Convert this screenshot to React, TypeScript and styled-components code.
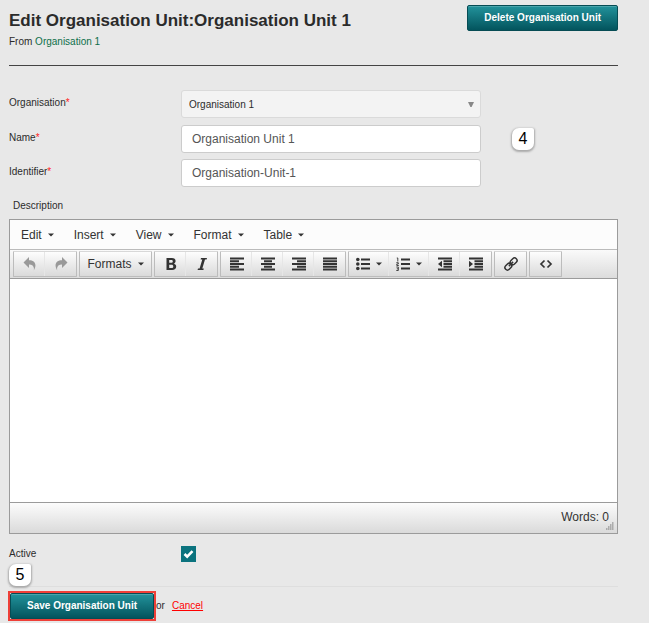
import React from 'react';
import styled, { createGlobalStyle, css } from 'styled-components';

const GlobalStyle = createGlobalStyle`
  *, *::before, *::after { box-sizing: border-box; }
  body {
    margin: 0;
    background: #e8e8e8;
    color: #2b2b2b;
    font: 10px/16px "Liberation Sans", Arial, sans-serif;
  }
  button, input, select, textarea { font-family: inherit; margin: 0; }
`;

const Page = styled.main`
  padding: 5px 31px 0 9px;
`;

const Header = styled.header`
  display: flex;
  justify-content: space-between;
  align-items: flex-start;
  height: 61px;
  border-bottom: 1px solid #444;
`;

const Title = styled.h1`
  margin: 4px 0 0;
  font-size: 17px;
  line-height: 24px;
  font-weight: bold;
`;

const Subtitle = styled.p`
  margin: 0;
  padding-top: 1px;
`;

const OrgLink = styled.a`
  color: #0f6f4a;
  text-decoration: none;
`;

const PrimaryButton = styled.button`
  height: 26px;
  padding: 0 16px;
  border: 1px solid #064c54;
  border-radius: 2px;
  background: linear-gradient(#22929b, #03545d);
  box-shadow: inset 0 1px 0 #4aa5ac;
  color: #fff;
  font-size: 10px;
  line-height: 16px;
  font-weight: bold;
  white-space: nowrap;
  cursor: pointer;
`;

const Fields = styled.div`
  display: grid;
  gap: 6px;
  padding-top: 24px;
`;

const FieldRow = styled.div`
  display: grid;
  grid-template-columns: 172px minmax(0, 300px) auto;
  align-items: center;
`;

const Label = styled.label`
  padding-bottom: 3px;
`;

const Required = styled.span`
  color: #f22;
`;

const controlStyle = css`
  width: 100%;
  height: 28px;
  border: 1px solid #ccc;
  border-radius: 3px;
`;

const TextInput = styled.input`
  ${controlStyle}
  padding: 0 10px;
  background: #fff;
  color: #555;
  font-size: 12px;
`;

const SelectWrap = styled.div`
  display: grid;
  align-items: center;
  padding-bottom: 1px;
  > * { grid-area: 1 / 1; }
  > svg { justify-self: end; margin-right: 7px; pointer-events: none; }
`;

const Select = styled.select`
  ${controlStyle}
  padding: 0 7px;
  border-color: #dadada;
  appearance: none;
  background: #f3f3f3;
  color: #2b2b2b;
  font-size: 10px;
`;

const StepBadge = styled.span<{ $inset?: boolean }>`
  display: flex;
  align-items: center;
  justify-content: center;
  width: 22px;
  height: 22px;
  margin-left: ${p => (p.$inset ? '0' : '31px')};
  border-radius: 7px 2px 7px 7px;
  background: #fff;
  box-shadow: 0 1px 2px 1px #aaa;
  color: #000;
  font-size: 16px;
  line-height: 20px;
`;

const DescriptionLabel = styled.label`
  display: block;
  padding: 11px 4px 5px;
`;

const Editor = styled.section`
  border: 1px solid #9b9b9b;
  background: #fff;
`;

const MenuBar = styled.div`
  display: flex;
  height: 30px;
  padding: 0 1px;
  border-bottom: 1px solid #bbb;
  background: #fcfcfc;
`;

const MenuButton = styled.button`
  display: flex;
  align-items: center;
  gap: 6px;
  padding: 0 10px;
  border: 0;
  background: none;
  color: #333;
  font-size: 12px;
  line-height: 16px;
`;

const ToolBar = styled.div`
  display: flex;
  gap: 2px;
  height: 29px;
  padding: 1px 3px;
  border-bottom: 1px solid #9b9b9b;
  background: linear-gradient(#fafafa, #dcdcdc);
`;

const ToolGroup = styled.div`
  display: flex;
  border: 1px solid #bcbcbc;
  border-top-color: #d8d8d8;
  border-radius: 1px;
  background: linear-gradient(#fdfdfd, #dadada);
`;

const widths = { icon: '31px', split: '40px', text: '71px' };

const ToolButton = styled.button<{ $kind?: keyof typeof widths }>`
  display: flex;
  align-items: center;
  justify-content: center;
  gap: 6px;
  width: ${p => widths[p.$kind ?? 'icon']};
  padding: 0;
  border: 0;
  background: none;
  color: #333;
  font-size: 12px;
  line-height: 16px;
  & + & { box-shadow: -1px 0 0 #e6e6e6; }
  &:disabled { color: #999; }
`;

const EditArea = styled.textarea`
  display: block;
  width: 100%;
  height: 223px;
  padding: 8px;
  border: 0;
  resize: none;
  outline: 0;
  background: #fff;
  font-size: 12px;
`;

const StatusBar = styled.footer`
  display: flex;
  justify-content: flex-end;
  height: 31px;
  padding: 6px 2px 2px 0;
  border-top: 1px solid #9b9b9b;
  background: linear-gradient(#fcfcfc, #dadada);
  color: #333;
  font-size: 12px;
  line-height: 16px;
  > svg { align-self: flex-end; margin-left: -4px; }
`;

const ActiveRow = styled.div`
  display: grid;
  grid-template-columns: 172px auto;
  align-items: center;
  padding: 12px 0 2px;
`;

const CheckWrap = styled.span`
  display: grid;
  width: 15px;
  height: 16px;
  place-items: center;
  > * { grid-area: 1 / 1; }
  > svg { pointer-events: none; }
`;

const CheckInput = styled.input`
  appearance: none;
  width: 100%;
  height: 100%;
  background: #9a9a9a;
  &:checked { background: #0b737e; }
`;

const StepLine = styled.div`
  height: 23px;
  border-bottom: 1px solid #dedede;
`;

const Actions = styled.div`
  display: flex;
  align-items: center;
  margin: 4px 0 0 -1px;
`;

const Highlight = styled.div`
  display: flex;
  border: 2px solid #ee4038;
`;

const CancelLink = styled.a`
  margin-left: 7px;
  color: #f00;
  text-decoration: underline;
`;

const Caret = () => (
  <svg width="6" height="4" viewBox="0 0 6 4" aria-hidden="true">
    <path d="M0 .5h6L3 3.5z" fill="#333" />
  </svg>
);

const SelectArrow = () => (
  <svg width="6" height="6" viewBox="0 0 6 6" aria-hidden="true">
    <path d="M0 1h6L3.6 6H2.4z" fill="#888" />
  </svg>
);

const Grip = () => (
  <svg width="10" height="9" viewBox="0 0 10 9" aria-hidden="true">
    <path d="M7 1h2M5 3h4M3 5h6M1 7h8" stroke="#777" strokeDasharray="1.5 .5" />
  </svg>
);

const Tick = () => (
  <svg width="11" height="10" viewBox="0 0 11 10" aria-hidden="true">
    <path d="M1.5 5l2.7 2.7L9.5 2.2" fill="none" stroke="#fff" strokeWidth="2.6" />
  </svg>
);

const iconShapes = {
  undo: <path d="M6 0v3.200c5.500 0 8.500 3.800 4.800 10.300C11.600 9.300 9.500 7.500 6 7.500V11L.5 5.500z" fill="currentColor" />,
  redo: <path d="M8 0v3.200c-5.500 0-8.500 3.800-4.800 10.300C2.400 9.300 4.500 7.500 8 7.500V11l5.500-5.500z" fill="currentColor" />,
  bold: (
    <path
      fillRule="evenodd"
      fill="currentColor"
      d="M2.5 1h5.3c2.5 0 3.8 1.2 3.8 3.1 0 1.2-.6 2.1-1.7 2.6 1.5.4 2.3 1.4 2.3 2.8 0 2.2-1.5 3.5-4.1 3.5H2.500zM5.200 3v2.800h2c1.100 0 1.600-.5 1.600-1.400S8.300 3 7.200 3zM5.200 7.800V11h2.300c1.200 0 1.800-.6 1.800-1.600s-.6-1.600-1.800-1.600z"
    />
  ),
  italic: <path d="M6 1h6l-.4 1.500H10L7.300 11.500h1.500L8.400 13H2.600L3 11.500h1.600L7.300 2.500H5.600z" fill="currentColor" />,
  left: <path d="M0 1.500h14M0 4.250h9M0 7h14M0 9.750h9M0 12.500h14" stroke="currentColor" strokeWidth="1.800" />,
  center: <path d="M0 1.500h14M3 4.250h8M0 7h14M3 9.750h8M0 12.500h14" stroke="currentColor" strokeWidth="1.800" />,
  right: <path d="M0 1.500h14M5 4.250h9M0 7h14M5 9.750h9M0 12.500h14" stroke="currentColor" strokeWidth="1.800" />,
  justify: <path d="M0 1.500h14M0 4.250h14M0 7h14M0 9.750h14M0 12.500h14" stroke="currentColor" strokeWidth="1.800" />,
  bullets: (
    <>
      <path d="M5 2.500h9M5 7h9M5 11.500h9" stroke="currentColor" strokeWidth="2" />
      <g fill="currentColor">
        <circle cx="1.800" cy="2.500" r="1.800" />
        <circle cx="1.800" cy="7" r="1.800" />
        <circle cx="1.800" cy="11.500" r="1.800" />
      </g>
    </>
  ),
  numbers: (
    <>
      <path d="M5 2.500h9M5 7h9M5 11.500h9" stroke="currentColor" strokeWidth="2" />
      <path
        d="M.8 1h1v3.500M.3 5.700h2v1.300H.8v1.500h2M.3 10h2v3.500h-2M.8 11.800h1.500"
        fill="none"
        stroke="currentColor"
        strokeWidth=".9"
      />
    </>
  ),
  outdent: (
    <>
      <path d="M0 1.500h14M5.500 4.250H14M5.500 7H14M5.500 9.750H14M0 12.500h14" stroke="currentColor" strokeWidth="1.800" />
      <path d="M4 3.700v6.600L0 7z" fill="currentColor" />
    </>
  ),
  indent: (
    <>
      <path d="M0 1.500h14M5.500 4.250H14M5.500 7H14M5.500 9.750H14M0 12.500h14" stroke="currentColor" strokeWidth="1.800" />
      <path d="M0 3.700v6.600L4 7z" fill="currentColor" />
    </>
  ),
  link: (
    <g fill="none" stroke="currentColor" strokeWidth="1.500" transform="rotate(-45 7 7)">
      <rect x="-.5" y="4.500" width="7.500" height="5" rx="2.500" />
      <rect x="7" y="4.500" width="7.500" height="5" rx="2.500" />
      <path d="M4 7h6" />
    </g>
  ),
  code: <path d="M5.500 3.500L2 7l3.500 3.500M8.500 3.500L12 7l-3.500 3.500" fill="none" stroke="currentColor" strokeWidth="1.700" />,
};

type IconName = keyof typeof iconShapes;

const Icon = ({ name }: { name: IconName }) => (
  <svg width="14" height="14" viewBox="0 0 14 14" aria-hidden="true">
    {iconShapes[name]}
  </svg>
);

type Tool = { label: string; icon?: IconName; menu?: boolean; disabled?: boolean };

const toolGroups: Tool[][] = [
  [
    { label: 'Undo', icon: 'undo', disabled: true },
    { label: 'Redo', icon: 'redo', disabled: true },
  ],
  [{ label: 'Formats', menu: true }],
  [
    { label: 'Bold', icon: 'bold' },
    { label: 'Italic', icon: 'italic' },
  ],
  [
    { label: 'Align left', icon: 'left' },
    { label: 'Align center', icon: 'center' },
    { label: 'Align right', icon: 'right' },
    { label: 'Justify', icon: 'justify' },
  ],
  [
    { label: 'Bullet list', icon: 'bullets', menu: true },
    { label: 'Numbered list', icon: 'numbers', menu: true },
    { label: 'Decrease indent', icon: 'outdent' },
    { label: 'Increase indent', icon: 'indent' },
  ],
  [{ label: 'Insert link', icon: 'link' }],
  [{ label: 'Source code', icon: 'code' }],
];

const kindOf = (tool: Tool) => (!tool.icon ? 'text' : tool.menu ? 'split' : 'icon');

export default function App() {
  return (
    <>
      <GlobalStyle />
      <Page>
        <Header>
          <div>
            <Title>Edit Organisation Unit:Organisation Unit 1</Title>
            <Subtitle>
              From <OrgLink href="#organisation">Organisation 1</OrgLink>
            </Subtitle>
          </div>
          <PrimaryButton type="button">Delete Organisation Unit</PrimaryButton>
        </Header>
        <form onSubmit={e => e.preventDefault()}>
          <Fields>
            <FieldRow>
              <Label htmlFor="organisation">
                Organisation<Required>*</Required>
              </Label>
              <SelectWrap>
                <Select id="organisation">
                  <option>Organisation 1</option>
                </Select>
                <SelectArrow />
              </SelectWrap>
            </FieldRow>
            <FieldRow>
              <Label htmlFor="name">
                Name<Required>*</Required>
              </Label>
              <TextInput id="name" defaultValue="Organisation Unit 1" />
              <StepBadge>4</StepBadge>
            </FieldRow>
            <FieldRow>
              <Label htmlFor="identifier">
                Identifier<Required>*</Required>
              </Label>
              <TextInput id="identifier" defaultValue="Organisation-Unit-1" />
            </FieldRow>
          </Fields>
          <DescriptionLabel htmlFor="description">Description</DescriptionLabel>
          <Editor>
            <MenuBar>
              {['Edit', 'Insert', 'View', 'Format', 'Table'].map(item => (
                <MenuButton type="button" key={item}>
                  {item}
                  <Caret />
                </MenuButton>
              ))}
            </MenuBar>
            <ToolBar>
              {toolGroups.map(group => (
                <ToolGroup key={group[0].label}>
                  {group.map(tool => (
                    <ToolButton
                      type="button"
                      key={tool.label}
                      aria-label={tool.label}
                      disabled={tool.disabled}
                      $kind={kindOf(tool)}
                    >
                      {tool.icon ? <Icon name={tool.icon} /> : tool.label}
                      {tool.menu && <Caret />}
                    </ToolButton>
                  ))}
                </ToolGroup>
              ))}
            </ToolBar>
            <EditArea id="description" />
            <StatusBar>
              <span>Words: 0</span>
              <Grip />
            </StatusBar>
          </Editor>
          <ActiveRow>
            <label htmlFor="active">Active</label>
            <CheckWrap>
              <CheckInput id="active" type="checkbox" defaultChecked />
              <Tick />
            </CheckWrap>
          </ActiveRow>
          <StepLine>
            <StepBadge $inset>5</StepBadge>
          </StepLine>
          <Actions>
            <Highlight>
              <PrimaryButton type="submit">Save Organisation Unit</PrimaryButton>
            </Highlight>
            <span>or</span>
            <CancelLink href="#cancel">Cancel</CancelLink>
          </Actions>
        </form>
      </Page>
    </>
  );
}
